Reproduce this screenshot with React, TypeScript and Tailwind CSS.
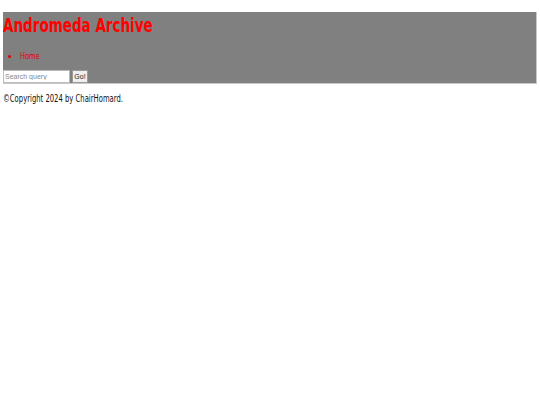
export default function App() {
  return (
    <div className="min-h-[405px] bg-white pt-3 px-[3px] font-['DejaVu_Sans_Condensed','DejaVu_Sans',sans-serif]">
      <header className="bg-[#808080] border-r border-b border-[#c8c8c8]">
        <h1 className="text-[19px] leading-[26px] font-bold text-[#ff0000]">
          <span className="inline-block origin-left scale-x-[0.79]">Andromeda Archive</span>
        </h1>
        <ul className="list-disc pl-[17px] mt-[12px] mb-[6px] text-[9px] text-[#e00000]">
          <li>
            <span className="inline-block origin-left scale-x-[0.82]">Home</span>
          </li>
        </ul>
        <form className="flex items-center gap-[2px] h-[13px]" onSubmit={e => e.preventDefault()}>
          <input
            type="text"
            placeholder="Search query"
            className="w-[67px] h-[13px] bg-white border border-[#bbbbbb] px-[1px] text-[7px] font-['Liberation_Sans_Narrow','Liberation_Sans',sans-serif] placeholder:text-[#888888] outline-none"
          />
          <button className="h-[13px] w-[16px] bg-[#efefef] border border-[#999999] text-[7px] font-normal leading-none text-[#222222] font-['Liberation_Sans_Narrow','Liberation_Sans',sans-serif]">
            Go!
          </button>
        </form>
      </header>
      <p className="mt-[8px] text-[10px] leading-[14px] text-[#111111]">
        <span className="inline-block origin-left scale-x-[0.76]">©Copyright 2024 by ChairHomard.</span>
      </p>
    </div>
  );
}
